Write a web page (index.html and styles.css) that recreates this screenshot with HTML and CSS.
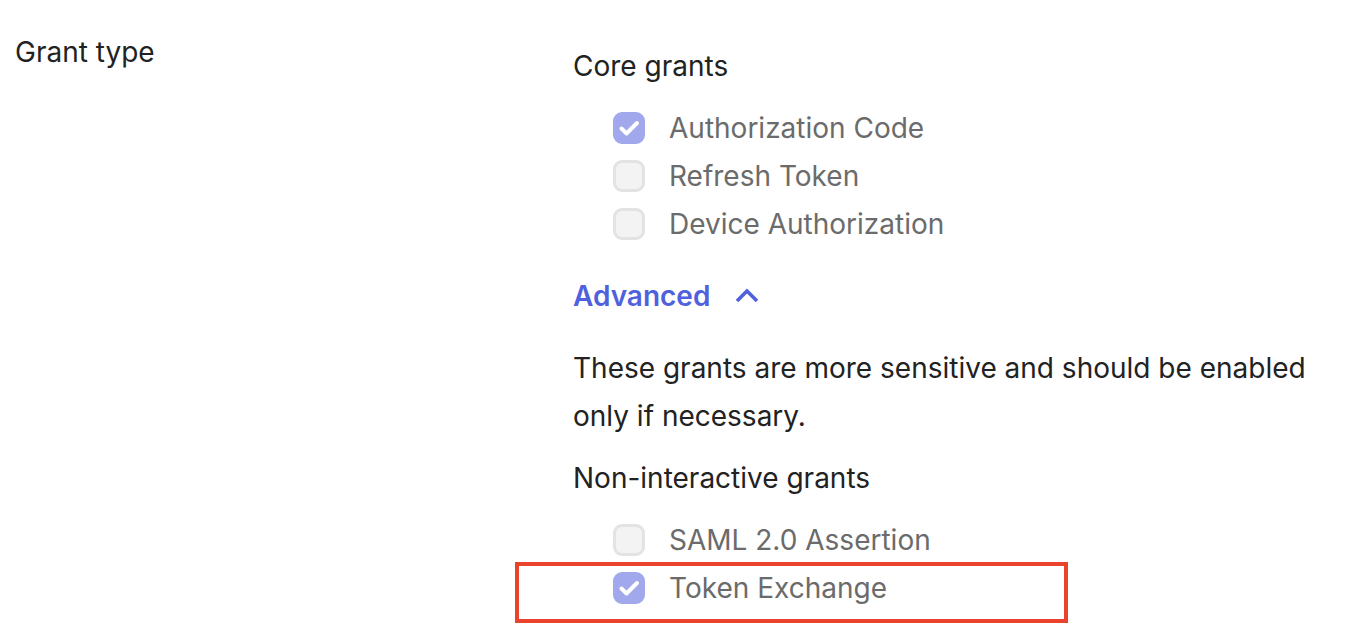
FILE: index.html
```html
<!DOCTYPE html>
<html>
<head>
<meta charset="utf-8">
<link rel="stylesheet" href="styles.css">
</head>
<body>
<div class="row">
  <div class="label">Grant type</div>
  <div class="field">
    <div class="group-title">Core grants</div>
    <div class="options">
      <div class="option"><span class="box checked"><svg viewBox="0 0 32 32"><path d="M8.5 16.5l5 5 10.5-10.5"/></svg></span><span class="opt-text">Authorization Code</span></div>
      <div class="option"><span class="box"></span><span class="opt-text">Refresh Token</span></div>
      <div class="option"><span class="box"></span><span class="opt-text">Device Authorization</span></div>
    </div>
    <div class="advanced">Advanced <svg class="chev" viewBox="0 0 24 16"><path d="M2 13l10-10 10 10"/></svg></div>
    <p class="desc">These grants are more sensitive and should be enabled only if necessary.</p>
    <div class="group-title sub">Non-interactive grants</div>
    <div class="options">
      <div class="option"><span class="box"></span><span class="opt-text">SAML 2.0 Assertion</span></div>
      <div class="option highlight"><span class="box checked"><svg viewBox="0 0 32 32"><path d="M8.5 16.5l5 5 10.5-10.5"/></svg></span><span class="opt-text">Token Exchange</span></div>
    </div>
  </div>
</div>
</body>
</html>
```
FILE: styles.css
```css
html, body { margin: 0; padding: 0; background: #fff; }
body { font-family: Inter, "Noto Sans", sans-serif; font-size: 28px; color: #222; padding-bottom: 30px; }
.row { display: flex; padding: 36px 0 0 15px; }
.label { width: 558px; line-height: 32px; color: #222; }
.field { width: 745px; }
.group-title { line-height: 32px; padding-top: 14px; }
.options { padding: 22px 0 0 40px; }
.option { display: flex; align-items: center; height: 48px; position: relative; }
.box { width: 32px; height: 32px; box-sizing: border-box; border-radius: 9px; background: #f3f3f3; border: 3px solid #e3e3e3; margin-right: 24px; display: flex; flex: none; }
.box.checked { background: #a1a8ec; border-color: #a1a8ec; }
.box svg { width: 32px; height: 32px; margin: -3px; }
.box path { fill: none; stroke: #fff; stroke-width: 4; stroke-linecap: round; stroke-linejoin: round; }
.opt-text { color: #6b6b6b; }
.advanced { color: #5061de; font-weight: 600; padding-top: 28px; line-height: 40px; display: flex; align-items: center; }
.chev { width: 24px; height: 16px; margin-left: 25px; }
.chev path { fill: none; stroke: #5061de; stroke-width: 3.6; }
.desc { margin: 0; padding-top: 28px; line-height: 48px; color: #222; }
.group-title.sub { padding-top: 22px; }
.highlight::before { content: ""; position: absolute; left: -98px; top: -2px; width: 553px; height: 61px; box-sizing: border-box; border: 4px solid #e9432d; }
```
